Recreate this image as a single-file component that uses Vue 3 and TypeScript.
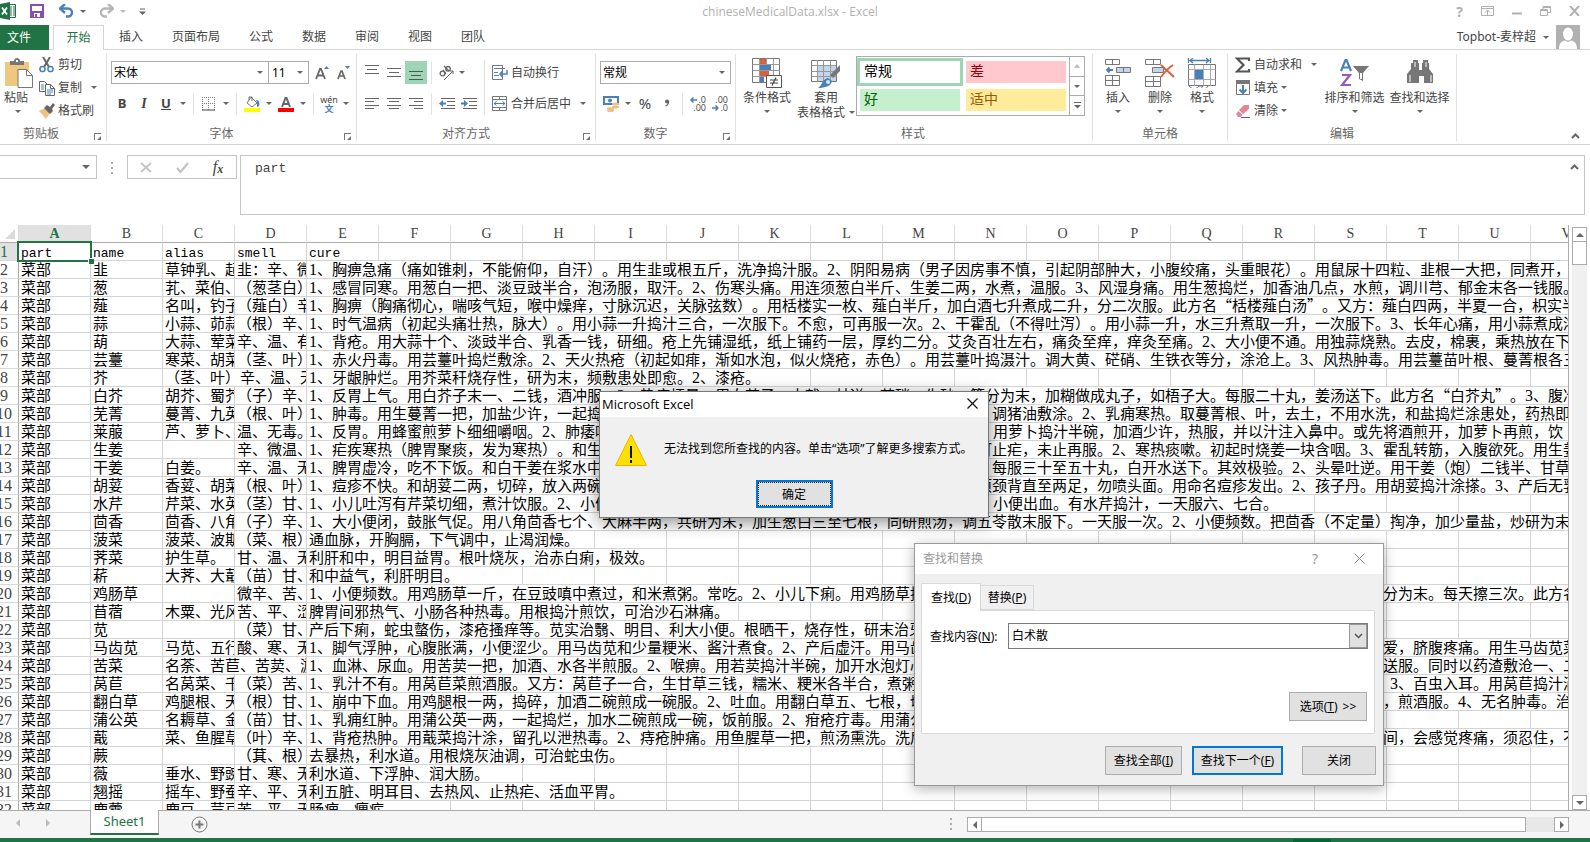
<script setup lang="ts">
import { ref } from 'vue'

interface Seg { t: string; k: 'cjk' | 'num' | 'word' }
interface Cell { segs: Seg[]; span: number; active: boolean }
interface Row { n: number; cells: Cell[] }

const COLS = 22
const COL_W = 72
const letters = Array.from({ length: COLS }, (_, i) => String.fromCharCode(65 + i))

const tabs = ['插入', '页面布局', '公式', '数据', '审阅', '视图', '团队']
const fontName = ref('宋体')
const fontSize = ref('11')
const numFormat = ref('常规')
const query = ref('白术散')
const cellText = ref('part')

function split(text: string): Seg[] {
  const parts = text.match(/[0-9]+|[a-z]+|[^0-9a-z]+/g) ?? []
  return parts.map((t) => ({ t, k: /[0-9]/.test(t) ? 'num' : /[a-z]/.test(t) ? 'word' : 'cjk' }))
}
function widthOf(text: string): number {
  let w = 0
  for (const c of text) w += c.charCodeAt(0) < 128 ? 8 : 15
  return w + 2
}

const source: string[][] = [
  ['part', 'name', 'alias', 'smell', 'cure'],
  ['菜部', '韭', '草钟乳、起', '韭：辛、微', '1、胸痹急痛（痛如锥刺，不能俯仰，自汗）。用生韭或根五斤，洗净捣汁服。2、阴阳易病（男子因房事不慎，引起阴部肿大，小腹绞痛，头重眼花）。用鼠尿十四粒、韭根一大把，同煮开，去'],
  ['菜部', '葱', '芤、菜伯、', '（葱茎白）', '1、感冒同寒。用葱白一把、淡豆豉半合，泡汤服，取汗。2、伤寒头痛。用连须葱白半斤、生姜二两，水煮，温服。3、风湿身痛。用生葱捣烂，加香油几点，水煎，调川芎、郁金末各一钱服。4'],
  ['菜部', '薤', '名叫，钓子', '（薤白）辛', '1、胸痹（胸痛彻心，喘咳气短，喉中燥痒，寸脉沉迟，关脉弦数）。用栝楼实一枚、薤白半斤，加白酒七升煮成二升，分二次服。此方名“栝楼薤白汤”。又方：薤白四两，半夏一合，枳实半'],
  ['菜部', '蒜', '小蒜、茆蒜', '（根）辛、', '1、时气温病（初起头痛壮热，脉大）。用小蒜一升捣汁三合，一次服下。不愈，可再服一次。2、干霍乱（不得吐泻）。用小蒜一升，水三升煮取一升，一次服下。3、长年心痛，用小蒜煮成浓'],
  ['菜部', '葫', '大蒜、荤菜', '辛、温、有', '1、背疮。用大蒜十个、淡豉半合、乳香一钱，研细。疮上先铺湿纸，纸上铺药一层，厚约二分。艾灸百壮左右，痛灸至痒，痒灸至痛。2、大小便不通。用独蒜烧熟。去皮，棉裹，乘热放在下部'],
  ['菜部', '芸薹', '寒菜、胡菜', '（茎、叶）', '1、赤火丹毒。用芸薹叶捣烂敷涂。2、天火热疮（初起如痱，渐如水泡，似火烧疮，赤色）。用芸薹叶捣滠汁。调大黄、硭硝、生铁衣等分，涂沧上。3、风热肿毒。用芸薹苗叶根、蔓菁根各三'],
  ['菜部', '芥', '（茎、叶）辛、温、无', '', '1、牙龈肿烂。用芥菜秆烧存性，研为末，频敷患处即愈。2、漆疮。'],
  ['菜部', '白芥', '胡芥、蜀芥', '（子）辛、', '1、反胃上气。用白芥子末一、二钱，酒冲服。2、热痰烦晕。用白芥子、大戟、甘遂、芒硝、朱砂，等分为末，加糊做成丸子，如梧子大。每服二十丸，姜汤送下。此方名“白芥丸”。3、腹冷'],
  ['菜部', '芜菁', '蔓菁、九英', '（根、叶）', '1、肿毒。用生蔓菁一把，加盐少许，一起捣烂，敷涂患处。又方：取蔓菁叶不沾水，烧灰研末，和匀，调猪油敷涂。2、乳痈寒热。取蔓菁根、叶，去土，不用水洗，和盐捣烂涂患处，药热即换'],
  ['菜部', '莱菔', '芦、萝卜、', '温、无毒。', '1、反胃。用蜂蜜煎萝卜细细嚼咽。2、肺痿咳血。用萝卜和羊肉煮熟频食。3、偏头痛。取汁滴于鼻上。用萝卜捣汁半碗，加酒少许，热服，并以汁注入鼻中。或先将酒煎开，加萝卜再煎，饮'],
  ['菜部', '生姜', '', '辛、微温、', '1、疟疾寒热（脾胃聚痰，发为寒热）。和生姜四两，捣取自然汁一酒杯，露一夜，于发病日晨服，即可止疟，未止再服。2、寒热痰嗽。初起时烧姜一块含咽。3、霍乱转筋，入腹欲死。用生姜'],
  ['菜部', '干姜', '白姜。', '辛、温、无', '1、脾胃虚冷，吃不下饭。和白干姜在浆水中煮透，取出焙干，捣碎为末，以陈米粥调和，做成小丸子，每服三十至五十丸，白开水送下。其效极验。2、头晕吐逆。用干姜（炮）二钱半、甘草'],
  ['菜部', '胡荽', '香荽、胡菜', '（根、叶）', '1、痘疹不快。和胡荽二两，切碎，放入两碗酒中，煎沸即盖严，勿令漏气，待冷去渣，微微含喷，自项颈背直至两足，勿喷头面。用命名痘疹发出。2、孩子丹。用胡荽捣汁涂搽。3、产后无乳'],
  ['菜部', '水芹', '芹菜、水英', '（茎）甘、', '1、小儿吐泻有芹菜切细，煮汁饮服。2、小便淋痛。用白根水芹捣汁，井水调服，每日早晚各一次。3、小便出血。有水芹捣汁，一天服六、七合。'],
  ['菜部', '茴香', '茴香、八角', '（子）辛、', '1、大小便闭，鼓胀气促。用八角茴香七个、大麻半两，共研为末，加生葱白三至七根，同研煎汤，调五苓散末服下。一天服一次。2、小便频数。把茴香（不定量）掏净，加少量盐，炒研为末，'],
  ['菜部', '菠菜', '菠菜、波斯', '（菜、根）', '通血脉，开胸膈，下气调中，止渴润燥。'],
  ['菜部', '荠菜', '护生草。', '甘、温、无', '利肝和中，明目益胃。根叶烧灰，治赤白痢，极效。'],
  ['菜部', '菥', '大荠、大蕺', '（苗）甘、', '和中益气，利肝明目。'],
  ['菜部', '鸡肠草', '', '微辛、苦、', '1、小便频数。用鸡肠草一斤，在豆豉嗔中煮过，和米煮粥。常吃。2、小儿下痢。用鸡肠草捣汁一合，和蜜服。3、风热牙痛。用鸡肠草、旱莲草、细辛，焙干，等分为末。每天擦三次。此方名'],
  ['菜部', '苜蓿', '木粟、光风', '苦、平、涩', '脾胃间邪热气、小肠各种热毒。用根捣汁煎饮，可治沙石淋痛。'],
  ['菜部', '苋', '', '（菜）甘、', '产后下痢，蛇虫螫伤，漆疮搔痒等。苋实治翳、明目、利大小便。根晒干，烧存性，研末治牙痛。'],
  ['菜部', '马齿苋', '马苋、五行', '酸、寒、无', '1、脚气浮肿，心腹胀满，小便涩少。用马齿苋和少量粳米、酱汁煮食。2、产后虚汗。用马齿苋研汁三合，煮开后加蜜一合服下。3、肛门肿痛。用马齿苋煎洗。难爱，脐腹疼痛。用生马齿苋菜'],
  ['菜部', '苦菜', '名荼、苦苣、苦荬、游', '', '1、血淋、尿血。用苦荬一把，加酒、水各半煎服。2、喉痹。用若荬捣汁半碗，加开水泡灯心少许服下。3、疔疮恶毒。用苦荬捣汁，再调匀后以温酒一小杯慢慢地送服。同时以药渣敷沧一、二'],
  ['菜部', '莴苣', '名莴菜、千', '（菜）苦、', '1、乳汁不有。用莴苣菜煎酒服。又方：莴苣子一合，生甘草三钱，糯米、粳米各半合，煮粥频服。2、小便不通。用莴苣子捣成饼贴在脐中，即通。也可用叶捣烂。3、百虫入耳。用莴苣捣汁滴'],
  ['菜部', '翻白草', '鸡腿根、天', '（根）甘、', '1、崩中下血。用鸡腿根一两，捣碎，加酒二碗煎成一碗服。2、吐血。用翻白草五、七根，切碎，加水二碗煎成一碗，空腹服。3、疟疾寒热。用翻白草根五至七个，煎酒服。4、无名肿毒。治'],
  ['菜部', '蒲公英', '名耨草、金', '（苗）甘、', '1、乳痈红肿。用蒲公英一两，一起捣烂，加水二碗煎成一碗，饭前服。2、疳疮疔毒。用蒲公英捣烂敷涂。'],
  ['菜部', '蕺', '菜、鱼腥草', '（叶）辛、', '1、背疮热肿。用蕺菜捣汁涂，留孔以泄热毒。2、痔疮肿痛。用鱼腥草一把，煎汤熏洗。洗后以草垫敷患处。3、虫牙作痛。用鱼腥草、花椒等分，捣烂塞入牙洞中间，会感觉疼痛，须忍住，不'],
  ['菜部', '蕨', '', '（萁、根）', '去暴热，利水道。用根烧灰油调，可治蛇虫伤。'],
  ['菜部', '薇', '垂水、野豌', '甘、寒、无', '利水道、下浮肿、润大肠。'],
  ['菜部', '翘摇', '摇车、野蚕', '辛、平、无', '利五脏、明耳目、去热风、止热疟、活血平胃。'],
  ['菜部', '鹿藿', '鹿豆、荳豆', '苦、平、无', '肠痈、瘰疬。'],
]

function buildRow(values: string[], index: number): Row {
  const cells: Cell[] = []
  let c = 0
  while (c < COLS) {
    const text = values[c] ?? ''
    let span = 1
    if (text) {
      const need = Math.ceil(widthOf(text) / COL_W)
      while (span < need && c + span < COLS && !values[c + span]) span++
    }
    cells.push({ segs: split(text), span, active: index === 0 && c === 0 })
    c += span
  }
  return { n: index + 1, cells }
}
const rows: Row[] = source.map(buildRow)
</script>

<template>
  <div class="app" lang="zh-CN">
    <header class="titlebar">
      <div class="quick">
        <svg class="logo" width="17" height="18" viewBox="0 0 17 18" aria-hidden="true">
          <path d="M9 2.500h6.500v13H9z" fill="#fff" stroke="#217346" />
          <path d="M10 5h2M13 5h2M10 7h2M13 7h2M10 9h2M13 9h2M10 11h2M13 11h2M10 13h2M13 13h2" stroke="#217346" />
          <path d="M0 2l10-2v18L0 16z" fill="#217346" />
          <path d="M2 5.500l5 7M7 5.500l-5 7" stroke="#fff" stroke-width="1.800" />
        </svg>
        <button class="q save" aria-label="保存">
          <svg width="14" height="14" viewBox="0 0 14 14"><path d="M1 1h12v12H1z" fill="none" stroke="#8650ae" stroke-width="2" /><path d="M2 7h10v6H2z" fill="#8650ae" /><path d="M4 9h6v4H4z" fill="#fff" /><path d="M5 10h2v3H5z" fill="#8650ae" /></svg>
        </button>
        <button class="q undo" aria-label="撤消">
          <svg width="15" height="14" viewBox="0 0 15 14"><path d="M2 4.500h7a4 4 0 0 1 0 8H7" fill="none" stroke="#4a80ba" stroke-width="2.400" /><path d="M6 0L1 4.500L6 9" fill="none" stroke="#4a80ba" stroke-width="2.400" /></svg>
        </button>
        <i class="caret"></i>
        <button class="q redo" aria-label="恢复">
          <svg width="15" height="14" viewBox="0 0 15 14"><path d="M13 4.500H6a4 4 0 0 0 0 8h2" fill="none" stroke="#b5b5b5" stroke-width="2.400" /><path d="M9 0l5 4.500L9 9" fill="none" stroke="#b5b5b5" stroke-width="2.400" /></svg>
        </button>
        <i class="caret pale"></i>
        <button class="q more" aria-label="自定义"><svg width="7" height="7" viewBox="0 0 7 7"><path d="M1 1h5" stroke="#666" /><path d="M0 3.500h7L3.500 7z" fill="#666" /></svg></button>
      </div>
      <div class="doc">chineseMedicalData.xlsx - Excel</div>
      <div class="winbtns">
        <button aria-label="帮助" class="help">?</button>
        <button aria-label="功能区选项"><svg width="13" height="10" viewBox="0 0 13 10" fill="none" stroke="#b0b0b0"><path d="M.5.5h12v9H.5zM1 2.500h11M6.500 9V4.500M4 6.500L6.500 4L9 6.500" /></svg></button>
        <button aria-label="最小化"><svg width="10" height="10" viewBox="0 0 10 10"><path d="M0 7.500h10" stroke="#b0b0b0" stroke-width="2" /></svg></button>
        <button aria-label="还原"><svg width="11" height="10" viewBox="0 0 11 10" fill="none" stroke="#b0b0b0"><path d="M.5 3.500h7v6h-7zM0 4.500h8M3 3V.5h7.500v6H8M3 1.500h8" /></svg></button>
        <button aria-label="关闭"><svg width="11" height="10" viewBox="0 0 11 10"><path d="M1 0l9 10M10 0L1 10" stroke="#b0b0b0" stroke-width="2" /></svg></button>
      </div>
    </header>

    <nav class="tabs">
      <button class="file">文件</button>
      <button class="tab on">开始</button>
      <button v-for="t in tabs" :key="t" class="tab">{{ t }}</button>
      <div class="account">
        <span>Topbot-麦梓超</span><i class="caret"></i>
        <svg width="24" height="24" viewBox="0 0 24 24"><path d="M0 0h24v24H0z" fill="#b1b1b1" /><ellipse cx="12" cy="9" rx="5" ry="6.500" fill="#fff" /><path d="M3 24c0-6 3-8 6-8.500l3 1.500l3-1.500c3 .5 6 2.500 6 8.500z" fill="#fff" /></svg>
      </div>
    </nav>

    <section class="ribbon">
      <div class="group clip">
        <div class="body">
          <button class="big paste">
            <svg width="30" height="30" viewBox="0 0 30 30"><path d="M2 4h24v24H2z" fill="#edc87e" /><path d="M7 7V3h4c0-4 6-4 6 0h4v4z" fill="#777" /><path d="M13 2h2v2h-2z" fill="#fff" /><path d="M15 11.500h8.500l6 6v12H15z" fill="#fff" stroke="#777" /><path d="M23.500 11.500v6h6" fill="none" stroke="#777" /></svg>
            <span>粘贴</span><i class="caret"></i>
          </button>
          <div class="list">
            <button class="tb"><svg width="16" height="16" viewBox="0 0 16 16"><path d="M4 0l6 10M11 0L5 10" stroke="#666" stroke-width="2" /><circle cx="3.500" cy="12" r="2.600" fill="#fff" stroke="#4a80ba" stroke-width="1.500" /><circle cx="11.500" cy="12" r="2.600" fill="#fff" stroke="#4a80ba" stroke-width="1.500" /></svg>剪切</button>
            <button class="tb"><svg width="16" height="16" viewBox="0 0 16 16"><path d="M.5 1.500h5l3 3v7h-8z" fill="#fff" stroke="#666" /><path d="M2 5h3M2 7h3M2 9h3" stroke="#4a80ba" /><path d="M6.500 4.500h5l4 4v7h-9z" fill="#fff" stroke="#666" /><path d="M11.500 4.500v4h4" fill="none" stroke="#666" /><path d="M8 10h6M8 12h6M8 14h4" stroke="#4a80ba" /></svg>复制<i class="caret far"></i></button>
            <button class="tb"><svg width="16" height="16" viewBox="0 0 16 16"><path d="M0 8l6-3 5 5-4 6z" fill="#edc087" /><path d="M5 5l3-3 3 2 3-4 2 2-3 4 1 2-3 3z" fill="#666" /></svg>格式刷</button>
          </div>
        </div>
        <div class="glabel wide">剪贴板</div><i class="launch"></i>
      </div>

      <div class="group font">
        <div class="rows">
          <div class="r">
            <span class="sel fname"><select v-model="fontName" aria-label="字体"><option>宋体</option></select><i class="caret"></i></span>
            <span class="sel fsize"><select v-model="fontSize" aria-label="字号"><option>11</option></select><i class="caret"></i></span>
            <button class="ib grow" aria-label="增大字号"><svg width="14" height="16" viewBox="0 0 14 16"><path d="M1 14L5 4h1l4 10M2.500 10.500h6" fill="none" stroke="#666" stroke-width="1.800" /><path d="M9 4h5l-2.500-3z" fill="#4a80ba" /></svg></button>
            <button class="ib" aria-label="减小字号"><svg width="14" height="16" viewBox="0 0 14 16"><path d="M1 14l3-8h1l3 8M2 11h5" fill="none" stroke="#666" stroke-width="1.700" /><path d="M8 1h5l-2.500 3z" fill="#4a80ba" /></svg></button>
          </div>
          <div class="r">
            <button class="ib b" aria-label="加粗">B</button><button class="ib it" aria-label="倾斜">I</button><button class="ib u" aria-label="下划线">U</button><i class="cw"><i class="caret"></i></i>
            <i class="vs"></i>
            <button class="ib" aria-label="边框"><svg width="14" height="14" viewBox="0 0 14 14" stroke="#777" fill="none"><path d="M0 .5h13M.5 0v13M6.500 0v13M12.500 0v13M0 6.500h13" stroke-dasharray="1 1" /><path d="M0 13h13" stroke="#444" /></svg></button><i class="cw"><i class="caret"></i></i>
            <i class="vs"></i>
            <button class="ib" aria-label="填充颜色"><svg width="16" height="16" viewBox="0 0 16 16"><path d="M7 1l6 6-5 4-5-4z" fill="#fff" stroke="#777" /><path d="M5 4V1h3v4" fill="none" stroke="#777" /><path d="M12 4c3 0 4 3 3 6l-2 1V7z" fill="#4a80ba" /><path d="M0 12h16v4H0z" fill="#ff0" /></svg></button><i class="cw"><i class="caret"></i></i>
            <button class="ib" aria-label="字体颜色"><svg width="16" height="16" viewBox="0 0 16 16"><path d="M4 11L7.500 2h1L12 11M5 8h6" fill="none" stroke="#666" stroke-width="2" /><path d="M0 12h16v4H0z" fill="#f00" /></svg></button><i class="cw"><i class="caret"></i></i>
            <i class="vs"></i>
            <button class="ib wen" aria-label="拼音"><span>wén</span><b>文</b></button><i class="cw"><i class="caret"></i></i>
          </div>
        </div>
        <div class="glabel wide">字体</div><i class="launch"></i>
      </div>

      <div class="group align">
        <div class="split">
          <div class="rows">
            <div class="r">
              <button class="ib" aria-label="顶端对齐"><svg width="14" height="17" viewBox="0 0 14 17"><path d="M0 1.500h14M2 5.500h10M0 9.500h14" stroke="#666" /></svg></button>
              <button class="ib" aria-label="垂直居中"><svg width="14" height="17" viewBox="0 0 14 17"><path d="M0 4.500h14M2 8.500h10M0 12.500h14" stroke="#666" /></svg></button>
              <button class="ib on" aria-label="底端对齐"><svg width="14" height="17" viewBox="0 0 14 17"><path d="M0 7.500h14M2 11.500h10M0 15.500h14" stroke="#555" /></svg></button>
              <i class="vs"></i>
              <button class="ib" aria-label="方向"><svg width="16" height="16" viewBox="0 0 16 16" fill="none" stroke="#666"><circle cx="3.500" cy="8.500" r="2.300" stroke-width="1.300" /><path d="M4 5l3 4M5 1l5 5" stroke-width="1.300" /><circle cx="9" cy="3.800" r="2.300" stroke-width="1.300" /><path d="M5 15L14 6M11 6h3v3" /></svg></button><i class="cw near"><i class="caret"></i></i>
            </div>
            <div class="r">
              <button class="ib" aria-label="左对齐"><svg width="14" height="12" viewBox="0 0 14 12"><path d="M0 .5h14M0 3.500h9M0 7.500h14M0 10.500h9" stroke="#666" /></svg></button>
              <button class="ib" aria-label="居中"><svg width="14" height="12" viewBox="0 0 14 12"><path d="M0 .5h14M2 3.500h10M0 7.500h14M2 10.500h10" stroke="#666" /></svg></button>
              <button class="ib" aria-label="右对齐"><svg width="14" height="12" viewBox="0 0 14 12"><path d="M0 .5h14M5 3.500h9M0 7.500h14M5 10.500h9" stroke="#666" /></svg></button>
              <i class="vs"></i>
              <button class="ib" aria-label="减少缩进量"><svg width="16" height="12" viewBox="0 0 16 12"><path d="M2 .5h14M8 3.500h8M8 7.500h8M2 10.500h14" stroke="#666" /><path d="M0 5.500l4-3.500v2.500h3v2H4V9z" fill="#4a80ba" /></svg></button>
              <button class="ib" aria-label="增加缩进量"><svg width="16" height="12" viewBox="0 0 16 12"><path d="M2 .5h14M8 3.500h8M8 7.500h8M2 10.500h14" stroke="#666" /><path d="M7 5.500L3 2v2.500H0v2h3V9z" fill="#4a80ba" /></svg></button>
            </div>
          </div>
          <i class="vs tall"></i>
          <div class="rows">
            <div class="r"><button class="tb"><svg width="16" height="15" viewBox="0 0 16 15"><path d="M.5.5h10v14H.5z" fill="#fff" stroke="#777" /><path d="M2 3.500h7M2 10.500h5" stroke="#4a80ba" /><path d="M2 7.500h4M9 3.500h4" stroke="#777" /><path d="M15 5v4H8M10.500 6L8 9l2.500 3" fill="none" stroke="#4a80ba" stroke-width="1.500" /></svg>自动换行</button></div>
            <div class="r"><button class="tb"><svg width="16" height="15" viewBox="0 0 16 15"><path d="M.5.5h14v14H.5zM.5 3.500h14M.5 11.500h14M7.500 .5v3M7.500 11.500v3" fill="none" stroke="#777" /><path d="M2 7.500h11M4.500 5.500L2 7.500l2.500 2M10.500 5.500L13 7.500l-2.500 2" fill="none" stroke="#4a80ba" /></svg>合并后居中<i class="caret far"></i></button></div>
          </div>
        </div>
        <div class="glabel wide">对齐方式</div><i class="launch"></i>
      </div>

      <div class="group number">
        <div class="rows">
          <div class="r"><span class="sel nfmt"><select v-model="numFormat" aria-label="数字格式"><option>常规</option></select><i class="caret"></i></span></div>
          <div class="r">
            <button class="ib" aria-label="会计数字格式"><svg width="16" height="16" viewBox="0 0 16 16"><path d="M0 0h16v9H0z" fill="#4a80ba" /><path d="M2 2h12v5H2z" fill="#fff" /><circle cx="7" cy="4.500" r="2" fill="#4a80ba" /><ellipse cx="12.500" cy="8" rx="3.500" ry="1.500" fill="#edc087" /><ellipse cx="12.500" cy="11" rx="3.500" ry="1.500" fill="#edc087" /><ellipse cx="7.500" cy="12.500" rx="3.500" ry="1.500" fill="#edc087" /><ellipse cx="7.500" cy="14.500" rx="3.500" ry="1.500" fill="#edc087" /></svg></button><i class="cw"><i class="caret"></i></i>
            <button class="ib pct" aria-label="百分比">%</button><button class="ib" aria-label="千位分隔"><svg width="6" height="9" viewBox="0 0 6 9"><circle cx="3" cy="2.500" r="2" fill="#666" /><path d="M4.500 2c.5 2.500-.8 4-3 5" fill="none" stroke="#666" stroke-width="1.300" /></svg></button>
            <i class="vs"></i>
            <button class="ib dec" aria-label="增加小数位数"><span><svg width="7" height="6" viewBox="0 0 7 6"><path d="M7 3H1M3.500 .5L1 3l2.500 2.500" fill="none" stroke="#4a80ba" stroke-width="1.500" /></svg>.0</span><span>.00</span></button>
            <button class="ib dec" aria-label="减少小数位数"><span>.00</span><span><svg width="7" height="6" viewBox="0 0 7 6"><path d="M0 3h6M3.500 .5L6 3L3.500 5.500" fill="none" stroke="#4a80ba" stroke-width="1.500" /></svg>.0</span></button>
          </div>
        </div>
        <div class="glabel wide">数字</div><i class="launch"></i>
      </div>

      <div class="group styles">
        <div class="body">
          <button class="big w58">
            <svg width="30" height="30" viewBox="0 0 30 30"><path d="M.5.500h27v24H.5z" fill="#fff" stroke="#777" /><path d="M.5 6.500h27M.5 12.500h27M.5 18.500h27M7.500.5v24M14.500.5v24M21.500.5v24" stroke="#999" /><path d="M8 1h6v5H8zM8 13h9v5H8z" fill="#d8603d" /><path d="M8 7h11v5H8zM8 19h4v5H8z" fill="#4a80ba" /><path d="M14.500 17.500h15v12h-15z" fill="#fff" stroke="#555" /><path d="M18 22h8M18 25h8M24 19.500l-4 8" stroke="#444" stroke-width="1.200" /></svg>
            <span>条件格式</span><i class="caret"></i>
          </button>
          <button class="big w60">
            <svg width="30" height="30" viewBox="0 0 30 30"><path d="M.5 2.500h25v21H.5z" fill="#fff" stroke="#777" /><path d="M7 8h18v15H7z" fill="#c2d5ea" /><path d="M.5 7.500h25M.5 13.500h25M.5 18.500h25M6.500 2.500v21M12.500 2.500v21M19.500 2.500v21" stroke="#999" /><path d="M29 7v6l-7 7-3-3z" fill="#777" /><path d="M17 20l4 3c-1 5-7 7-14 7c4-2 4-9 10-10z" fill="#4a80ba" /><circle cx="17" cy="24" r="2" fill="#dce8f5" /></svg>
            <span>套用</span><span>表格格式<i class="caret in"></i></span>
          </button>
          <div class="gallery">
            <div class="swatches">
              <button class="sw normal">常规</button><button class="sw bad">差</button>
              <button class="sw good">好</button><button class="sw neutral">适中</button>
            </div>
            <div class="gscroll"><button aria-label="上一行"><i class="caret up pale"></i></button><button aria-label="下一行"><i class="caret"></i></button><button aria-label="其他"><svg width="7" height="7" viewBox="0 0 7 7"><path d="M0 .5h7" stroke="#666" /><path d="M0 3h7L3.500 6.500z" fill="#666" /></svg></button></div>
          </div>
        </div>
        <div class="glabel">样式</div>
      </div>

      <div class="group cells">
        <div class="body">
          <button class="big w42">
            <svg width="30" height="30" viewBox="0 0 30 30" fill="#fff" stroke="#777"><path d="M2.500 1.500h14v5h-14zM9.500 1.500v5M2.500 17.500h14v10h-14zM9.500 17.500v10M2.500 22.500h14" /><path d="M13.500 9.500h14v5h-14zM20.500 9.500v5" fill="#c2d5ea" /><path d="M10 12H4M6.500 9.500L4 12l2.500 2.500" fill="none" stroke="#4a80ba" stroke-width="1.800" /></svg>
            <span>插入</span><i class="caret"></i>
          </button>
          <button class="big w42">
            <svg width="30" height="30" viewBox="0 0 30 30" fill="#fff" stroke="#777"><path d="M.5 1.500h15v5H.5zM8.500 1.500v5M.5 18.500h15v10H.5zM8.500 18.500v10M.5 23.500h15" /><path d="M7.500 9.500h11v5h-11z" fill="#c2d5ea" /><path d="M16 7l13 12M28 7c-5 3-9 8-12 12" fill="none" stroke="#d8603d" stroke-width="2" /></svg>
            <span>删除</span><i class="caret"></i>
          </button>
          <button class="big w42">
            <svg width="30" height="30" viewBox="0 0 30 30"><path d="M1.500 0v5M23.500 0v5M3 2.500h19M6 0L3 2.500L6 5M19 0l3 2.500L19 5" fill="none" stroke="#4a80ba" stroke-width="1.300" /><path d="M1.500 6.500h27v21h-27z" fill="#fff" stroke="#777" /><path d="M1.500 11.500h27M1.500 21.500h27M7.500 6.500v21M16.500 6.500v21M23.500 6.500v21" stroke="#aaa" /><path d="M8 12h8v9H8z" fill="#4a80ba" /><path d="M2 28l3 2.500h4l3-2.500h4l-2 2.500h5l2-2.500" fill="none" stroke="#777" /></svg>
            <span>格式</span><i class="caret"></i>
          </button>
        </div>
        <div class="glabel">单元格</div>
      </div>

      <div class="group edit">
        <div class="body">
          <div class="list">
            <button class="tb"><svg width="16" height="16" viewBox="0 0 16 16"><path d="M14 4V1.500H2L8.500 8L2 14.500h12V12" fill="none" stroke="#555" stroke-width="2.200" /></svg>自动求和<i class="caret far"></i></button>
            <button class="tb"><svg width="16" height="16" viewBox="0 0 16 16"><path d="M1.500 1.500h13v13h-13z" fill="#fff" stroke="#777" /><path d="M1 0h14v4H1z" fill="#777" /><path d="M8 5v8M4.500 9.500L8 13l3.500-3.500" fill="none" stroke="#4a80ba" stroke-width="2" /></svg>填充<i class="caret"></i></button>
            <button class="tb"><svg width="16" height="16" viewBox="0 0 16 16"><path d="M9 2l5 0v4l-6 5-4-4z" fill="#e58495" /><path d="M3.500 8l4 4-2 2H3L1 11z" fill="#e58495" /><path d="M6 14.500h9" stroke="#666" /></svg>清除<i class="caret"></i></button>
          </div>
          <button class="big w65">
            <svg width="30" height="30" viewBox="0 0 30 30"><path d="M1 13L5.500 2h1L11 13M3 9.500h6" fill="none" stroke="#4a80ba" stroke-width="2.200" /><path d="M2 17h8L2 27h9" fill="none" stroke="#9659b5" stroke-width="2.200" /><path d="M13 8h16l-6 7v8l-4-2v-6z" fill="#777" /><path d="M20 15h2v6h-2z" fill="#fff" /></svg>
            <span>排序和筛选</span><i class="caret"></i>
          </button>
          <button class="big w65">
            <svg width="30" height="30" viewBox="0 0 30 30" fill="#777"><path d="M8 2h5v3h1v7h3V5h1V2h5v3h1v6l4 5v9h-9v-7h-5v7H2v-9l4-5V5h2z" /><path d="M5 17v7M26 17v7M10 4v5M21 4v5" stroke="#fff" /></svg>
            <span>查找和选择</span><i class="caret"></i>
          </button>
        </div>
        <div class="glabel">编辑</div>
      </div>
      <button class="collapse" aria-label="折叠功能区"><svg width="9" height="6" viewBox="0 0 9 6"><path d="M1 5l3.500-3.500L8 5" fill="none" stroke="#666" stroke-width="2" /></svg></button>
    </section>

    <section class="fbar">
      <div class="namebox"><i class="caret"></i></div>
      <svg class="dots" width="3" height="12" viewBox="0 0 3 12"><path d="M0 0h2v2H0zM0 5h2v2H0zM0 10h2v2H0z" fill="#aaa" /></svg>
      <div class="fbtns">
        <button aria-label="取消"><svg width="12" height="11" viewBox="0 0 12 11"><path d="M1 1l10 9M11 1L1 10" stroke="#c3c3c3" stroke-width="1.800" /></svg></button>
        <button aria-label="输入"><svg width="13" height="11" viewBox="0 0 13 11"><path d="M1 6l3.500 4L12 1" fill="none" stroke="#c3c3c3" stroke-width="2.200" /></svg></button>
        <button class="fx" aria-label="插入函数">f<small>x</small></button>
      </div>
      <div class="formula"><textarea v-model="cellText" aria-label="编辑栏" spellcheck="false"></textarea><svg width="9" height="6" viewBox="0 0 9 6"><path d="M1 5l3.500-3.500L8 5" fill="none" stroke="#666" stroke-width="2" /></svg></div>
    </section>

    <main class="sheet">
      <div class="grid">
        <table>
          <colgroup><col class="c0" /><col v-for="l in letters" :key="l" class="cn" /></colgroup>
          <thead><tr><th class="corner"><i></i></th><th v-for="(l, i) in letters" :key="l" :class="{ cur: i === 0 }">{{ l }}</th></tr></thead>
          <tbody>
            <tr v-for="r in rows" :key="r.n">
              <th :class="{ cur: r.n === 1 }">{{ r.n }}</th>
              <td v-for="(c, i) in r.cells" :key="i" :colspan="c.span">
                <div class="v"><span v-for="(s, j) in c.segs" :key="j" :class="s.k">{{ s.t }}</span></div>
                <i v-if="c.active" class="pick"></i>
              </td>
            </tr>
          </tbody>
        </table>
      </div>
      <div class="vbar"><button aria-label="向上"><i class="caret up"></i></button><div class="thumb"></div><div class="track"></div><button aria-label="向下"><i class="caret down"></i></button></div>
    </main>

    <footer class="foot">
      <div class="navs"><i class="tri l"></i><i class="tri r"></i></div>
      <button class="stab">Sheet1</button>
      <button class="add" aria-label="新工作表"><svg width="17" height="17" viewBox="0 0 17 17"><circle cx="8.500" cy="8.500" r="7.500" fill="none" stroke="#777" /><path d="M4.500 8.500h8M8.500 4.500v8" stroke="#777" stroke-width="2" /></svg></button>
      <svg class="dots hd" width="3" height="12" viewBox="0 0 3 12"><path d="M0 0h2v2H0zM0 5h2v2H0zM0 10h2v2H0z" fill="#aaa" /></svg>
      <div class="hbar"><button aria-label="向左"><i class="tri l dk"></i></button><div class="hthumb"></div><div class="htrack"></div><button aria-label="向右"><i class="tri r dk"></i></button></div>
    </footer>
    <div class="status"><i></i></div>

    <div class="msg" role="alertdialog" aria-label="Microsoft Excel">
      <div class="mtitle"><span>Microsoft Excel</span><button aria-label="关闭"><svg width="11" height="11" viewBox="0 0 11 11"><path d="M.5.5l10 10M10.500.5l-10 10" stroke="#111" stroke-width="1.200" /></svg></button></div>
      <div class="mbody">
        <svg width="34" height="34" viewBox="0 0 34 34"><path d="M17 1.500L32.500 32.500H1.500z" fill="#fce100" stroke="#f0b400" /><path d="M17 13v12M17 27v3" stroke="#111" stroke-width="2" /></svg>
        <p>无法找到您所查找的内容。单击“选项”了解更多搜索方式。</p>
      </div>
      <button class="ok"><span>确定</span></button>
    </div>

    <div class="find" role="dialog" aria-label="查找和替换">
      <div class="ftitle"><span>查找和替换</span><button class="fq" aria-label="帮助">?</button><button aria-label="关闭"><svg width="11" height="11" viewBox="0 0 11 11"><path d="M.5.5l10 10M10.500.5l-10 10" stroke="#888" /></svg></button></div>
      <div class="ftabs"><button class="ft on">查找(<u>D</u>)</button><button class="ft">替换(<u>P</u>)</button></div>
      <div class="panel">
        <div class="field"><label for="q">查找内容(<u>N</u>):</label><div class="combo"><input id="q" v-model="query" type="text" /><button aria-label="展开"><svg width="9" height="6" viewBox="0 0 9 6"><path d="M1 1l3.500 3.500L8 1" fill="none" stroke="#555" stroke-width="1.500" /></svg></button></div></div>
        <button class="wb opt">选项(<u>T</u>)<span>&gt;&gt;</span></button>
      </div>
      <div class="facts"><button class="wb all">查找全部(<u>I</u>)</button><button class="wb next">查找下一个(<u>F</u>)</button><button class="wb close">关闭</button></div>
    </div>
  </div>
</template>

<style>
html, body { margin: 0; overflow: hidden; }
</style>

<style scoped>
* { box-sizing: border-box; }
.app { position: relative; height: 100vh; display: flex; flex-direction: column; overflow: hidden; background: #fff; color: #444; font: 12px/15px "Noto Sans", "Noto Sans CJK SC", sans-serif; text-spacing-trim: space-all; }
button { font: inherit; color: inherit; background: none; border: 0; padding: 0; margin: 0; display: flex; align-items: center; justify-content: center; white-space: nowrap; }
i { font-style: normal; display: block; }
svg { display: block; flex: none; }
.caret { width: 0; height: 0; border: 3px solid transparent; border-top: 3px solid #666; border-bottom: 0; flex: none; }
.caret.up { border-top: 0; border-bottom: 4px solid #666; }
.vbar .caret.up { border-width: 0 4px 4px; }
.caret.down { border-width: 4px 4px 0; }
.caret.pale { border-top-color: #bbb; }
.caret.up.pale { border-bottom-color: #bbb; }

.titlebar { height: 25px; flex: none; display: flex; align-items: center; padding: 0 10px 3px 0; }
.quick { flex: 1; display: flex; align-items: center; }
.save { margin-left: 13px; }
.undo { margin: 0 6px 0 15px; }
.redo { margin: 0 6px 0 13px; }
.more { margin-left: 13px; }
.doc { color: #b0b0b0; font-family: "Open Sans", sans-serif; }
.winbtns { flex: 1; display: flex; justify-content: flex-end; align-items: center; gap: 18px; }
.help { color: #b0b0b0; font-weight: 700; font-size: 14px; }

.tabs { height: 25px; flex: none; display: flex; border-bottom: 1px solid #d5d5d5; }
.file { width: 49px; padding-right: 11px; background: #217346; color: #fff; height: 25px; }
.tab { padding: 0 14px 2px 15px; height: 24px; }
.tab.on { margin-left: 4px; width: 51px; padding: 0 0 1px; height: 25px; color: #217346; background: #fff; border: 1px solid #d5d5d5; border-bottom: 0; }
.account { margin-left: auto; display: flex; align-items: center; padding-right: 10px; }
.account span { padding-bottom: 2px; }
.account .caret { margin: 0 7px; }

.ribbon { height: 95px; flex: none; display: flex; padding-top: 4px; border-bottom: 1px solid #d5d5d5; position: relative; }
.group { position: relative; height: 87px; border-right: 1px solid #e1e1e1; display: flex; flex-direction: column; flex: none; }
.glabel { margin-top: auto; text-align: center; color: #666; height: 15px; padding-right: 4px; }
.glabel.wide { padding-right: 24px; }
.launch { position: absolute; right: 5px; bottom: 1px; width: 7px; height: 7px; border: 1px solid #777; border-right: 0; border-bottom: 0; }
.launch::after { content: ""; position: absolute; right: 0; bottom: 0; border: 2px solid #777; border-top-color: transparent; border-left-color: transparent; }
.clip { width: 107px; }
.font { width: 250px; padding-left: 4px; }
.align { width: 239px; padding-left: 4px; }
.number { width: 140px; padding-left: 4px; }
.styles { width: 357px; padding-left: 2px; }
.cells { width: 135px; padding-left: 4px; }
.edit { width: 229px; padding-left: 4px; }
.body { display: flex; height: 69px; }
.big { flex-direction: column; justify-content: flex-start; padding-top: 4px; height: 69px; }
.big svg { margin-bottom: 2px; }
.big > .caret { margin-top: 5px; }
.big span { display: flex; align-items: center; }
.caret.in { margin-left: 4px; }
.paste { width: 36px; }
.paste span { margin-right: 4px; }
.w58 { width: 58px; }
.w60 { width: 60px; }
.w42 { width: 42px; }
.w65 { width: 65px; }
.list { display: flex; flex-direction: column; }
.edit .list { width: 90px; }
.list .tb { padding-bottom: 2px; }
.tb { height: 23px; padding-left: 3px; justify-content: flex-start; }
.tb svg { margin-right: 3px; }
.tb .caret { margin-left: 3px; }
.tb .caret.far { margin-left: 9px; }
.rows { display: flex; flex-direction: column; gap: 8px; padding-top: 7px; }
.r { display: flex; height: 23px; align-items: center; }
.split { display: flex; }
.ib { width: 22px; height: 23px; flex: none; }
.ib.on { background: #9fd5b7; }
.grow { margin-left: 2px; }
.cw { width: 12px; display: flex; justify-content: center; }
.cw.near { width: 8px; }
.vs { width: 1px; height: 22px; margin: 0 4px; background: #e1e1e1; flex: none; }
.vs.tall { height: 55px; margin-top: 6px; }
.align .split > .rows:first-child { width: 119px; }
.b { font-weight: 700; font-size: 13px; }
.it { font: italic 700 14px "Liberation Serif", serif; }
.u { font-weight: 700; font-size: 13px; text-decoration: underline; }
.wen { flex-direction: column; font-size: 9px; line-height: 9px; }
.wen b { color: #4a80ba; font-size: 9px; }
.pct { font-size: 15px; }
.dec { flex-direction: column; align-items: flex-end; font: 9px/8px "Open Sans", sans-serif; padding-right: 3px; }
.dec span { display: flex; align-items: center; gap: 1px; }
.sel { position: relative; height: 23px; border: 1px solid #ababab; display: flex; align-items: center; color: #000; }
.sel select { appearance: none; width: 100%; height: 100%; border: 0; padding: 0 2px; background: #fff; font: inherit; color: inherit; border-radius: 0; }
.sel .caret { position: absolute; right: 5px; }
.fname { width: 158px; }
.fsize { width: 40px; border-left: 0; }
.fsize select { padding-left: 3px; }
.nfmt { width: 131px; }
.gallery { margin-top: 2px; height: 60px; width: 229px; border: 1px solid #ababab; display: flex; }
.swatches { flex: 1; display: grid; grid-template-columns: 100px 100px; grid-auto-rows: 22px; gap: 6px; padding: 4px 3px; }
.sw { justify-content: flex-start; padding: 0 0 4px 4px; font-size: 14px; }
.normal { color: #000; outline: 3px solid #9fd5b7; }
.bad { background: #ffc7ce; color: #9c0006; }
.good { background: #c6efce; color: #006100; }
.neutral { background: #ffeb9c; color: #9c5700; }
.gscroll { width: 15px; display: flex; flex-direction: column; border-left: 1px solid #ababab; }
.gscroll button { flex: 1; }
.gscroll button + button { border-top: 1px solid #ababab; }
.collapse { position: absolute; right: 10px; bottom: 5px; }

.fbar { height: 80px; flex: none; display: flex; padding: 10px 5px 10px 0; align-items: flex-start; }
.namebox { width: 97px; height: 24px; border: 1px solid #c6c6c6; border-left: 0; display: flex; align-items: center; justify-content: flex-end; padding-right: 6px; }
.namebox .caret { border-width: 4px 4px 0; }
.dots { margin: 7px 14px 0 14px; }
.fbtns { width: 110px; height: 24px; border: 1px solid #c6c6c6; display: flex; margin: 0 3px 0 -1px; }
.fbtns button { flex: 1; }
.fx { font: italic 16px "Liberation Serif", serif; color: #444; }
.fx small { font-size: 12px; font-weight: 700; padding-top: 4px; }
.formula { flex: 1; height: 60px; border: 1px solid #c6c6c6; display: flex; align-items: flex-start; padding: 5px 5px 0 14px; }
.formula textarea { flex: 1; height: 50px; border: 0; padding: 0; resize: none; outline: 0; background: none; color: #444; font: 13px/16px "Liberation Mono", monospace; }
.formula svg { margin-top: 3px; }

.sheet { flex: 1; min-height: 0; display: flex; border-bottom: 1px solid #ababab; }
.grid { flex: 1; min-width: 0; overflow: hidden; border-right: 1px solid #ababab; }
table { table-layout: fixed; border-collapse: separate; border-spacing: 0; width: 1613px; margin-left: -10px; }
.c0 { width: 29px; }
.cn { width: 72px; }
th { height: 18px; padding: 0; font: 14px/17px "Liberation Serif", serif; color: #444; text-align: center; white-space: nowrap; }
thead th { border-right: 1px solid #dadada; border-bottom: 1px solid #ababab; padding-top: 1px; line-height: 16px; }
tbody th { border-right: 1px solid #ababab; border-bottom: 1px solid #dadada; font-size: 16px; }
th.cur { background: #e1e1e1; color: #217346; font-weight: 700; }
tbody th.cur { font-weight: 400; }
.corner i { width: 0; height: 0; margin-left: 15px; border: 5px solid transparent; border-right-color: #dadada; border-bottom-color: #dadada; }
td { position: relative; height: 18px; padding: 0; border-right: 1px solid #d4d4d4; border-bottom: 1px solid #d4d4d4; }
.v { height: 17px; padding-left: 2px; overflow: hidden; white-space: nowrap; color: #000; font: 15px/15px "Noto Sans CJK SC", sans-serif; }
.num { font: 16px/1px "Liberation Serif", serif; }
.word { font: 13px/1px "Liberation Mono", monospace; }
.pick { position: absolute; left: -2px; top: -2px; right: -2px; bottom: -2px; border: 2px solid #217346; z-index: 1; }
.pick::after { content: ""; position: absolute; right: -4px; bottom: -4px; width: 5px; height: 5px; background: #217346; border: 1px solid #fff; border-right: 0; border-bottom: 0; box-sizing: content-box; }
.vbar { width: 21px; display: flex; flex-direction: column; padding: 2px 3px 0; }
.vbar button { height: 15px; border: 1px solid #ababab; background: #fff; flex: none; }
.thumb { height: 23px; border: 1px solid #ababab; border-top: 0; background: #fff; flex: none; }
.track { flex: 1; background: #f0f0f0; }

.foot { height: 27px; flex: none; background: #f5f5f5; display: flex; align-items: flex-start; padding-right: 21px; }
.navs { width: 90px; display: flex; gap: 26px; padding: 8px 0 0 16px; }
.tri { width: 0; height: 0; border: 4px solid transparent; }
.tri.l { border-right-color: #bbb; border-left: 0; }
.tri.r { border-left-color: #bbb; border-right: 0; }
.tri.l.dk { border-right-color: #666; }
.tri.r.dk { border-left-color: #666; }
.stab { width: 69px; height: 25px; margin-top: -1px; background: #fff; color: #217346; border: 1px solid #ababab; border-top: 0; border-bottom: 2px solid #217346; font-size: 13px; position: relative; }
.add { margin: 5px 0 0 32px; }
.hd { margin: 7px 14px 0 auto; }
.hbar { width: 602px; height: 15px; margin-top: 6px; display: flex; background: #e8e8e8; }
.hbar button { width: 15px; border: 1px solid #ababab; background: #fff; }
.hthumb { flex: 1; border: 1px solid #ababab; border-left: 0; background: #fff; }
.htrack { width: 28px; }
.status { height: 4px; flex: none; background: #217346; display: flex; justify-content: flex-end; padding: 1px 259px 0 0; }
.status i { width: 38px; background: #0a6332; }

.msg { position: absolute; left: 599px; top: 391px; width: 390px; height: 127px; background: #f0f0f0; border: 1px solid #777; color: #000; box-shadow: 0 4px 16px rgba(0, 0, 0, .45); z-index: 3; display: flex; flex-direction: column; align-items: center; }
.mtitle { align-self: stretch; height: 25px; background: #fff; display: flex; justify-content: space-between; align-items: center; padding: 0 10px 2px 2px; font: 13px/16px "Open Sans", sans-serif; }
.mbody { align-self: stretch; display: flex; align-items: flex-start; padding: 16px 0 0 14px; height: 63px; }
.mbody p { margin: 8px 0 0 16px; white-space: nowrap; }
.ok { width: 77px; height: 28px; border: 2px solid #0078d7; background: #e1e1e1; padding: 0; }
.ok span { flex: 1; height: 24px; display: flex; align-items: center; justify-content: center; border: 1px dotted #222; }

.find { position: absolute; left: 914px; top: 543px; width: 470px; height: 243px; background: #f0f0f0; border: 1px solid #999; color: #000; box-shadow: 0 3px 12px rgba(0, 0, 0, .3); z-index: 2; }
.ftitle { height: 30px; background: #fff; color: #999; display: flex; align-items: center; padding: 0 18px 1px 8px; }
.ftitle span { flex: 1; }
.fq { margin-right: 36px; font-size: 14px; }
.ftabs { display: flex; align-items: flex-end; padding: 9px 0 0 6px; height: 36px; }
.ft { height: 25px; border: 1px solid #d9d9d9; border-left: 0; width: 53px; }
.ft.on { position: relative; z-index: 1; height: 28px; width: 60px; background: #fff; border-left: 1px solid #d9d9d9; border-bottom: 0; margin-bottom: -1px; padding-bottom: 1px; }
.panel { margin: 0 8px 0 6px; height: 124px; background: #fff; border: 1px solid #d9d9d9; padding: 12px 6px 12px 8px; display: flex; flex-direction: column; }
.field { display: flex; align-items: center; justify-content: space-between; }
.combo { width: 360px; height: 26px; border: 1px solid #7a7a7a; display: flex; }
.combo input { flex: 1; min-width: 0; border: 0; outline: 0; padding: 0 3px 2px; font: inherit; color: #000; }
.combo button { width: 18px; background: #e1e1e1; border: 1px solid #999; }
.wb { height: 29px; background: #e1e1e1; border: 1px solid #adadad; }
.opt { width: 78px; margin: auto 1px 0 auto; flex: none; }
.opt span { margin-left: 5px; }
.facts { display: flex; justify-content: flex-end; padding: 12px 7px 0 0; }
.all { width: 77px; }
.next { width: 91px; margin: 0 19px 0 10px; border: 2px solid #0078d7; }
.close { width: 74px; }
</style>
